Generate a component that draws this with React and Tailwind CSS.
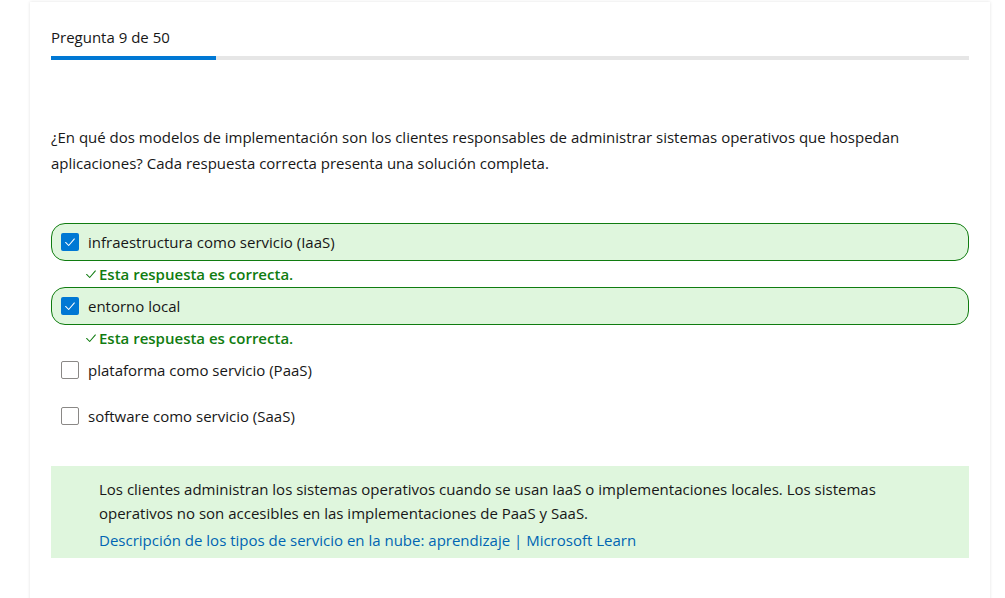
import React from "react";

const font = { fontFamily: '"Open Sans", "Noto Sans", Arial, sans-serif' };

function CheckMark({ className }) {
  return (
    <svg viewBox="0 0 16 16" className={className} fill="none" stroke="currentColor" strokeWidth="1.2" strokeLinecap="round" strokeLinejoin="round">
      <path d="M3 8.5 L6.5 12 L13 4.5" />
    </svg>
  );
}

function Checkbox({ checked }) {
  if (checked) {
    return (
      <span className="flex h-[18px] w-[18px] shrink-0 items-center justify-center rounded-[2px] bg-[#0078d4] text-white">
        <CheckMark className="h-[14px] w-[14px]" />
      </span>
    );
  }
  return <span className="h-[18px] w-[18px] shrink-0 rounded-[2px] border border-[#8a8886] bg-white" />;
}

function Feedback() {
  return (
    <div className="flex h-[26px] items-center pl-[33px] text-[15px] font-semibold text-[#107c10]">
      <CheckMark className="mr-[1px] h-[14px] w-[14px] font-normal" />
      <span>Esta respuesta es correcta.</span>
    </div>
  );
}

function Option({ label, correct }) {
  if (correct) {
    return (
      <div className="flex h-[38px] items-center gap-[9px] rounded-[14px] border border-[#107c10] bg-[#dff6dd] pl-[9px] text-[15px] text-[#171717]">
        <Checkbox checked />
        <span>{label}</span>
      </div>
    );
  }
  return (
    <div className="flex h-[38px] items-center gap-[9px] border border-transparent pl-[9px] text-[15px] text-[#171717]">
      <Checkbox />
      <span>{label}</span>
    </div>
  );
}

export default function App() {
  return (
    <div className="min-h-[598px] w-[1005px] overflow-hidden bg-white" style={font}>
      <div className="ml-[30px] mt-[2px] h-[620px] w-[960px] bg-white px-[21px] pt-[25px] shadow-[0_0_3px_rgba(0,0,0,0.12)]">
        <div className="text-[15px] leading-[20px] text-[#171717]">Pregunta 9 de 50</div>
        <div className="mt-[9px] h-[4px] w-full bg-[#e6e6e6]">
          <div className="h-full w-[165px] bg-[#0078d4]" />
        </div>
        <p className="mt-[64px] text-[15px] leading-[26px] text-[#171717]">
          ¿En qué dos modelos de implementación son los clientes responsables de administrar sistemas operativos que hospedan aplicaciones? Cada respuesta correcta presenta una solución completa.
        </p>
        <div className="mt-[47px] flex flex-col">
          <Option label="infraestructura como servicio (IaaS)" correct />
          <Feedback />
          <Option label="entorno local" correct />
          <Feedback />
          <Option label="plataforma como servicio (PaaS)" />
          <div className="mt-[8px]">
            <Option label="software como servicio (SaaS)" />
          </div>
        </div>
        <div className="mt-[31px] bg-[#dff6dd] pb-[6px] pl-[48px] pr-[40px] pt-[11px] text-[15px] text-[#171717]">
          <p className="leading-[24px]">
            Los clientes administran los sistemas operativos cuando se usan IaaS o implementaciones locales. Los sistemas operativos no son accesibles en las implementaciones de PaaS y SaaS.
          </p>
          <a className="mt-[3px] block leading-[24px] text-[#0065b3]">
            Descripción de los tipos de servicio en la nube: aprendizaje | Microsoft Learn
          </a>
        </div>
      </div>
    </div>
  );
}
